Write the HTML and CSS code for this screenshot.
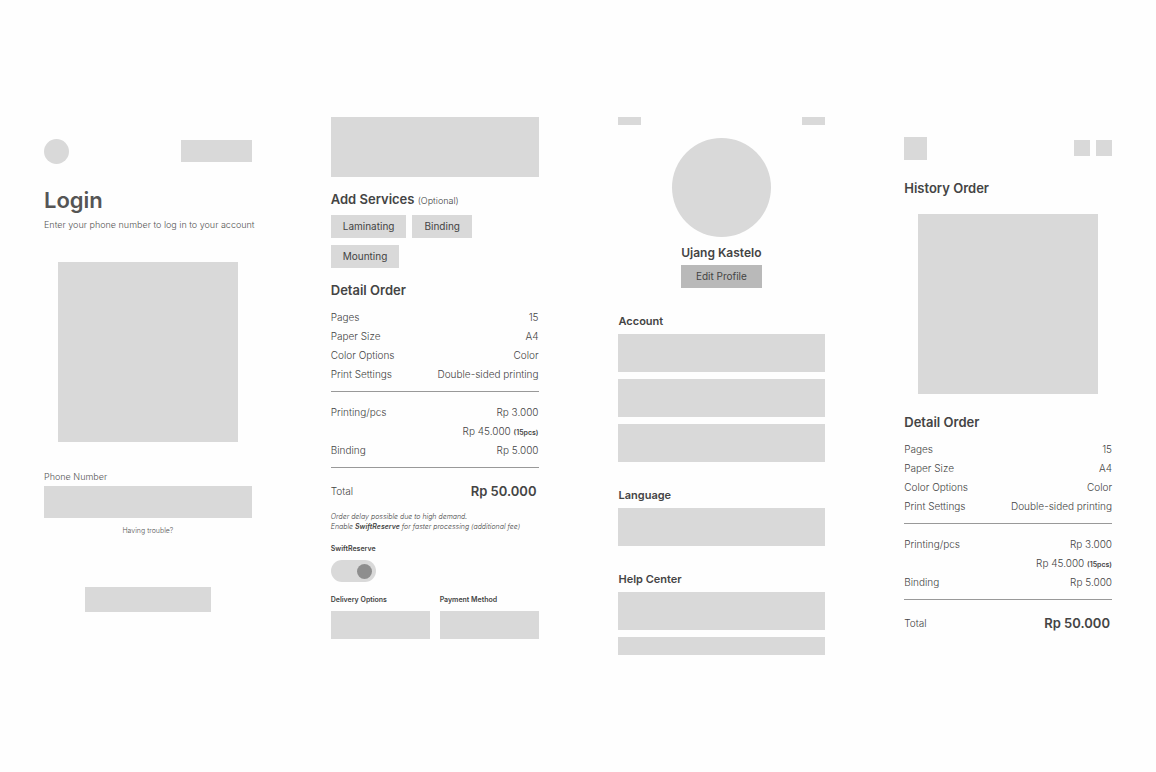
FILE: index.html
```html
<!DOCTYPE html>
<html lang="en">
<head>
<meta charset="utf-8">
<meta name="viewport" content="width=device-width, initial-scale=1">
<title>Print order wireframes</title>
<link rel="stylesheet" href="styles.css">
</head>
<body>
<main class="board">
  <section class="screen login">
    <header class="bar">
      <div class="block logo"></div>
      <button type="button" class="block language" aria-label="Language"></button>
    </header>
    <h1 class="login-title">Login</h1>
    <p class="login-sub">Enter your phone number to log in to your account</p>
    <div class="block picture login-picture"></div>
    <label class="phone-label" for="phone">Phone Number</label>
    <input class="block phone" id="phone" type="tel">
    <a class="trouble" href="#">Having trouble?</a>
    <button type="button" class="block submit" aria-label="Log in"></button>
  </section>

  <section class="screen order">
    <div class="block preview"></div>
    <h2 class="title services-title">Add Services <span class="optional">(Optional)</span></h2>
    <div class="chips">
      <button type="button" class="block chip">Laminating</button>
      <button type="button" class="block chip">Binding</button>
      <button type="button" class="block chip">Mounting</button>
    </div>
    <h2 class="title detail-title">Detail Order</h2>
    <table class="detail">
      <tbody>
        <tr><th scope="row">Pages</th><td>15</td></tr>
        <tr><th scope="row">Paper Size</th><td>A4</td></tr>
        <tr><th scope="row">Color Options</th><td>Color</td></tr>
        <tr><th scope="row">Print Settings</th><td>Double-sided printing</td></tr>
      </tbody>
      <tbody>
        <tr><th scope="row">Printing/pcs</th><td>Rp 3.000</td></tr>
        <tr><th></th><td>Rp 45.000 <b class="pcs">(15pcs)</b></td></tr>
        <tr><th scope="row">Binding</th><td>Rp 5.000</td></tr>
      </tbody>
      <tbody>
        <tr class="total"><th scope="row">Total</th><td class="sum">Rp 50.000</td></tr>
      </tbody>
    </table>
    <p class="note">Order delay possible due to high demand.<br>Enable <b>SwiftReserve</b> for faster processing (additional fee)</p>
    <label class="small-label swift-label" for="swift">SwiftReserve</label>
    <input class="toggle" id="swift" type="checkbox" role="switch" checked>
    <div class="choices">
      <div class="choice">
        <label class="small-label" for="delivery">Delivery Options</label>
        <select class="block select" id="delivery"></select>
      </div>
      <div class="choice">
        <label class="small-label" for="payment">Payment Method</label>
        <select class="block select" id="payment"></select>
      </div>
    </div>
  </section>

  <section class="screen profile">
    <header class="bar">
      <div class="block tab"></div>
      <div class="block tab"></div>
    </header>
    <div class="block avatar"></div>
    <h2 class="title name">Ujang Kastelo</h2>
    <button type="button" class="edit">Edit Profile</button>
    <h3 class="group-title">Account</h3>
    <div class="group">
      <div class="block item"></div>
      <div class="block item"></div>
      <div class="block item"></div>
    </div>
    <h3 class="group-title">Language</h3>
    <div class="group">
      <div class="block item"></div>
    </div>
    <h3 class="group-title">Help Center</h3>
    <div class="group">
      <div class="block item"></div>
      <div class="block item cut"></div>
    </div>
  </section>

  <section class="screen history">
    <header class="bar">
      <div class="block mark"></div>
      <div class="actions">
        <button type="button" class="block action" aria-label="Search"></button>
        <button type="button" class="block action" aria-label="Menu"></button>
      </div>
    </header>
    <h2 class="title history-title">History Order</h2>
    <div class="block picture"></div>
    <h2 class="title detail-title">Detail Order</h2>
    <table class="detail">
      <tbody>
        <tr><th scope="row">Pages</th><td>15</td></tr>
        <tr><th scope="row">Paper Size</th><td>A4</td></tr>
        <tr><th scope="row">Color Options</th><td>Color</td></tr>
        <tr><th scope="row">Print Settings</th><td>Double-sided printing</td></tr>
      </tbody>
      <tbody>
        <tr><th scope="row">Printing/pcs</th><td>Rp 3.000</td></tr>
        <tr><th></th><td>Rp 45.000 <b class="pcs">(15pcs)</b></td></tr>
        <tr><th scope="row">Binding</th><td>Rp 5.000</td></tr>
      </tbody>
      <tbody>
        <tr class="total"><th scope="row">Total</th><td class="sum">Rp 50.000</td></tr>
      </tbody>
    </table>
  </section>
</main>
</body>
</html>
```

FILE: styles.css
```css
* {
  box-sizing: border-box;
}

body {
  margin: 0;
  background: #fefefe;
  color: #444;
  font: 300 10px/19px Inter, "Liberation Sans", sans-serif;
}

h1, h2, h3, p {
  margin: 0;
}

button, input, select {
  appearance: none;
  border: 0;
  border-radius: 0;
  padding: 0;
  margin: 0;
  color: inherit;
  font: inherit;
}

.board {
  display: grid;
  grid-template-columns: repeat(4, minmax(0, 1fr));
  gap: 79px;
  padding: 117px 44px;
}

.screen {
  display: flex;
  flex-direction: column;
}

.block {
  background: #d9d9d9;
}

.bar {
  display: flex;
  align-items: flex-start;
  justify-content: space-between;
}

.title {
  font-size: 13px;
  font-weight: 600;
  line-height: 20px;
}

.picture {
  width: 180px;
  height: 180px;
  align-self: center;
}

/* Login */
.login {
  padding-top: 22px;
  color: #555;
}

.logo {
  width: 25px;
  height: 25px;
  border-radius: 50%;
}

.language {
  width: 71px;
  height: 22px;
  margin-top: 1px;
}

.login-title {
  margin-top: 22px;
  font-size: 22px;
  font-weight: 600;
  line-height: 28px;
}

.login-sub {
  margin-top: 1px;
  font-size: 9px;
  white-space: nowrap;
}

.login-picture {
  margin-top: 28px;
}

.phone-label {
  margin-top: 25px;
  font-size: 9px;
}

.phone {
  width: 100%;
  height: 32px;
}

.trouble {
  margin-top: 8px;
  align-self: center;
  color: inherit;
  font-size: 7px;
  line-height: 10px;
  text-decoration: none;
}

.submit {
  width: 126px;
  height: 25px;
  margin-top: 51px;
  align-self: center;
}

/* Order */
.preview {
  height: 60px;
}

.services-title {
  margin-top: 12px;
}

.optional {
  font-size: 9px;
  font-weight: 300;
  line-height: 10px;
}

.chips {
  display: flex;
  flex-wrap: wrap;
  gap: 7px 6px;
  margin-top: 6px;
}

.chip {
  height: 23px;
  padding: 0 12px;
  font-weight: 400;
}

.order .detail-title {
  margin-top: 12px;
}

.detail {
  width: 100%;
  margin-top: 8px;
  border-collapse: separate;
  border-spacing: 0;
}

.detail th,
.detail td {
  padding: 0;
  font-weight: 300;
  text-align: left;
}

.detail td {
  text-align: right;
}

.detail tbody:not(:last-child) tr:last-child > * {
  padding-bottom: 7px;
  border-bottom: 1px solid #999;
}

.detail tbody:nth-child(2) tr:first-child > * {
  padding-top: 11px;
}

.detail .total > * {
  padding-top: 14px;
}

.detail .sum {
  padding-right: 2px;
  font-size: 13px;
  font-weight: 600;
}

.pcs {
  font-size: 7px;
  font-weight: 600;
  line-height: 10px;
}

.note {
  margin-top: 11px;
  font-size: 7px;
  font-style: italic;
  line-height: 10px;
  white-space: nowrap;
}

.note b {
  font-weight: 600;
}

.small-label {
  font-size: 7px;
  font-weight: 600;
  line-height: 10px;
}

.swift-label {
  margin-top: 12px;
}

.toggle {
  display: flex;
  align-items: center;
  justify-content: flex-end;
  width: 45px;
  height: 22px;
  margin-top: 6px;
  padding: 0 4px;
  border-radius: 11px;
  background: #d9d9d9;
}

.toggle::before {
  content: "";
  width: 15px;
  height: 15px;
  border-radius: 50%;
  background: #8e8e8e;
}

.toggle:not(:checked) {
  justify-content: flex-start;
}

.choices {
  display: grid;
  grid-template-columns: 1fr 1fr;
  gap: 10px;
  margin-top: 13px;
}

.choice {
  display: flex;
  flex-direction: column;
  gap: 6px;
}

.select {
  width: 100%;
  height: 28px;
}

/* Profile */
.tab {
  width: 23px;
  height: 8px;
}

.avatar {
  width: 99px;
  height: 99px;
  margin-top: 13px;
  align-self: center;
  border-radius: 50%;
}

.name {
  margin-top: 6px;
  font-size: 12px;
  text-align: center;
}

.edit {
  height: 23px;
  margin-top: 2px;
  padding: 0 15px;
  align-self: center;
  background: #b9b9b9;
  font-weight: 400;
}

.group-title {
  margin-top: 25px;
  padding-left: 1px;
  font-size: 11px;
  font-weight: 600;
  line-height: 16px;
}

.group {
  display: grid;
  gap: 7px;
  margin-top: 5px;
}

.item {
  height: 38px;
}

.cut {
  height: 18px;
}

/* History */
.history {
  padding-top: 20px;
}

.mark {
  width: 23px;
  height: 23px;
}

.actions {
  display: flex;
  gap: 6px;
  padding-top: 3px;
}

.action {
  width: 16px;
  height: 16px;
}

.history-title {
  margin-top: 18px;
  margin-bottom: 16px;
}

.history .detail-title {
  margin-top: 18px;
}
```
